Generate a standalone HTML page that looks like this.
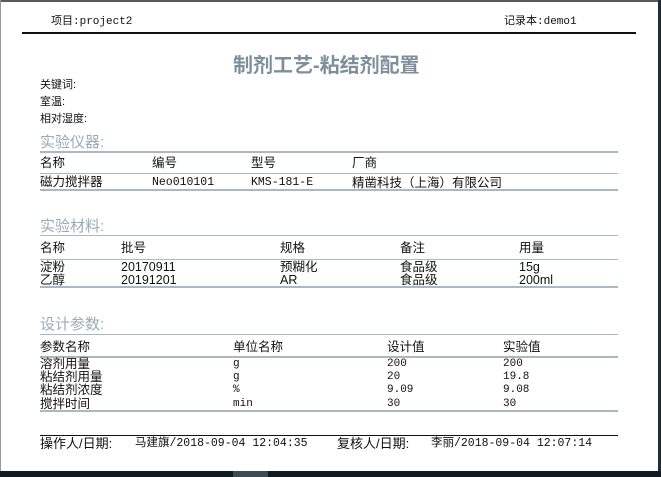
<!DOCTYPE html>
<html><head><meta charset="utf-8"><style>
body{margin:0;width:661px;height:477px;overflow:hidden;background:#fff;position:relative;font-family:"Liberation Sans","Noto Sans CJK SC",sans-serif;color:#111}
.a{position:absolute;white-space:nowrap;line-height:1}
.m{font-family:"Liberation Mono","Noto Sans CJK SC",monospace}
.h{position:absolute;left:40px;width:578px;height:2px;background:#a9b8c2}
.s{position:absolute;left:40px;font-size:15px;color:#9aabb7;line-height:1}
.t{font-size:12.5px}
.n{font-size:11px}
</style></head><body>
<div style="position:absolute;left:0;top:0;width:661px;height:2px;background:#5a5a5a"></div>
<div style="position:absolute;left:0;top:0;width:1px;height:477px;background:#9a9a9a"></div>
<div style="position:absolute;left:658px;top:0;width:3px;height:477px;background:#222c33"></div>
<div style="position:absolute;left:0;top:471px;width:661px;height:6px;background:#111b22"></div>
<div style="position:absolute;left:233px;top:471px;width:35px;height:6px;background:#3d4b55"></div>

<div class="a m" style="left:51px;top:17px;font-size:11px">项目:project2</div>
<div class="a m" style="left:504px;top:17px;font-size:11px">记录本:demo1</div>
<div style="position:absolute;left:22px;top:32px;width:614px;height:2px;background:#111"></div>

<div class="a" style="left:233px;top:56px;font-size:20px;font-weight:bold;color:#7c8f9b">制剂工艺-粘结剂配置</div>
<div class="a" style="left:40px;top:80px;font-size:11px">关键词:</div>
<div class="a" style="left:40px;top:97px;font-size:11px">室温:</div>
<div class="a" style="left:40px;top:114px;font-size:11px">相对湿度:</div>

<div class="s" style="top:135px">实验仪器:</div>
<div class="h" style="top:151px"></div>
<div class="a t" style="left:40px;top:157px">名称</div>
<div class="a t" style="left:152px;top:157px">编号</div>
<div class="a t" style="left:251px;top:157px">型号</div>
<div class="a t" style="left:352px;top:157px">厂商</div>
<div class="h" style="top:173px;height:1px"></div>
<div class="a t m" style="left:40px;top:177px">磁力搅拌器</div>
<div class="a m" style="left:152px;top:177px;font-size:11.5px">Neo010101</div>
<div class="a m" style="left:251px;top:177px;font-size:11.5px">KMS-181-E</div>
<div class="a t" style="left:352px;top:177px">精凿科技（上海）有限公司</div>
<div class="h" style="top:189px"></div>

<div class="s" style="top:219px">实验材料:</div>
<div class="h" style="top:235px;height:1px"></div>
<div class="a t" style="left:40px;top:242px">名称</div>
<div class="a t" style="left:121px;top:242px">批号</div>
<div class="a t" style="left:280px;top:242px">规格</div>
<div class="a t" style="left:400px;top:242px">备注</div>
<div class="a t" style="left:519px;top:242px">用量</div>
<div class="h" style="top:259px;height:1px"></div>
<div class="a t" style="left:40px;top:261px">淀粉</div>
<div class="a t" style="left:121px;top:261px">20170911</div>
<div class="a t" style="left:280px;top:261px">预糊化</div>
<div class="a t" style="left:400px;top:261px">食品级</div>
<div class="a t" style="left:519px;top:261px">15g</div>
<div class="a t" style="left:40px;top:274px">乙醇</div>
<div class="a t" style="left:121px;top:274px">20191201</div>
<div class="a t" style="left:280px;top:274px">AR</div>
<div class="a t" style="left:400px;top:274px">食品级</div>
<div class="a t" style="left:519px;top:274px">200ml</div>
<div class="h" style="top:286px"></div>

<div class="s" style="top:317px">设计参数:</div>
<div class="h" style="top:334px;height:1px"></div>
<div class="a t" style="left:40px;top:341px">参数名称</div>
<div class="a t" style="left:233px;top:341px">单位名称</div>
<div class="a t" style="left:387px;top:341px">设计值</div>
<div class="a t" style="left:503px;top:341px">实验值</div>
<div class="h" style="top:356px"></div>
<div class="a t" style="left:40px;top:358px">溶剂用量</div>
<div class="a m n" style="left:233px;top:359px">g</div>
<div class="a m n" style="left:387px;top:359px">200</div>
<div class="a m n" style="left:503px;top:359px">200</div>
<div class="a t" style="left:40px;top:371px">粘结剂用量</div>
<div class="a m n" style="left:233px;top:372px">g</div>
<div class="a m n" style="left:387px;top:372px">20</div>
<div class="a m n" style="left:503px;top:372px">19.8</div>
<div class="a t" style="left:40px;top:384px">粘结剂浓度</div>
<div class="a m n" style="left:233px;top:385px">%</div>
<div class="a m n" style="left:387px;top:385px">9.09</div>
<div class="a m n" style="left:503px;top:385px">9.08</div>
<div class="a t" style="left:40px;top:398px">搅拌时间</div>
<div class="a m n" style="left:233px;top:399px">min</div>
<div class="a m n" style="left:387px;top:399px">30</div>
<div class="a m n" style="left:503px;top:399px">30</div>
<div class="h" style="top:410px"></div>

<div style="position:absolute;left:40px;top:435px;width:578px;height:1px;background:#111"></div>
<div class="a" style="left:40px;top:437px;font-size:13px">操作人/日期:</div>
<div class="a m" style="left:135px;top:438px;font-size:11.5px">马建旗/2018-09-04 12:04:35</div>
<div class="a" style="left:337px;top:437px;font-size:13px">复核人/日期:</div>
<div class="a m" style="left:431px;top:438px;font-size:11.5px">李丽/2018-09-04 12:07:14</div>
</body></html>
